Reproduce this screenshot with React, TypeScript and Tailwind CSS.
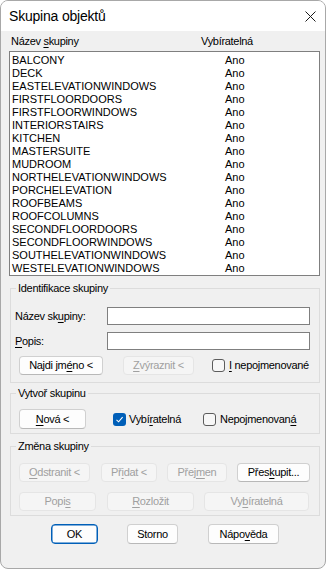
import React from 'react';

const groups = [
  'BALCONY',
  'DECK',
  'EASTELEVATIONWINDOWS',
  'FIRSTFLOORDOORS',
  'FIRSTFLOORWINDOWS',
  'INTERIORSTAIRS',
  'KITCHEN',
  'MASTERSUITE',
  'MUDROOM',
  'NORTHELEVATIONWINDOWS',
  'PORCHELEVATION',
  'ROOFBEAMS',
  'ROOFCOLUMNS',
  'SECONDFLOORDOORS',
  'SECONDFLOORWINDOWS',
  'SOUTHELEVATIONWINDOWS',
  'WESTELEVATIONWINDOWS',
];

const U = ({ children }: { children: React.ReactNode }) => <span className="underline underline-offset-[2px]">{children}</span>;

const Btn = ({
  children,
  className = '',
  disabled = false,
  primary = false,
}: {
  children: React.ReactNode;
  className?: string;
  disabled?: boolean;
  primary?: boolean;
}) => (
  <button
    type="button"
    disabled={disabled}
    className={`flex items-center justify-center rounded-[4px] border leading-none ${
      disabled
        ? 'bg-[#f5f5f5] border-[#e5e5e5] text-[#a0a0a0]'
        : primary
        ? 'bg-[#fdfdfd] border-[#005fb8] shadow-[inset_0_0_0_0.5px_#005fb8] text-black'
        : 'bg-[#fdfdfd] border-[#d0d0d0] border-b-[#b8b8b8] text-black'
    } ${className}`}
  >
    {children}
  </button>
);

const Check = ({ checked = false }: { checked?: boolean }) =>
  checked ? (
    <span className="flex h-[13px] w-[13px] items-center justify-center rounded-[3px] bg-[#005fb8]">
      <svg width="9" height="9" viewBox="0 0 9 9" fill="none">
        <path d="M1.5 4.8 L3.6 6.8 L7.6 2.2" stroke="white" strokeWidth="1.1" />
      </svg>
    </span>
  ) : (
    <span className="h-[13px] w-[13px] rounded-[3px] border border-[#5c5c5c] bg-[#f7f7f7]" />
  );

export default function App() {
  return (
    <div className="h-[571px] w-[327px] bg-white text-[11px] tracking-[-0.3px] text-black [font-family:'Liberation_Sans',Arial,sans-serif]">
      <div className="flex h-[569px] w-[326px] flex-col overflow-hidden rounded-[8px] border border-[#a8a8a8] bg-[#f0f0f0]">
        {/* Title bar */}
        <div className="flex h-[30px] shrink-0 items-center justify-between bg-white pl-[8px] pr-[9px]">
          <span className="text-[14px] tracking-[-0.2px]">Skupina objektů</span>
          <svg width="11" height="11" viewBox="0 0 11 11" fill="none">
            <path d="M0.5 0.5 L10.5 10.5 M10.5 0.5 L0.5 10.5" stroke="#1a1a1a" strokeWidth="1" />
          </svg>
        </div>

        {/* Header */}
        <div className="grid h-[20px] grid-cols-[190px_1fr] items-center pl-[10px]">
          <span>
            Název <U>s</U>kupiny
          </span>
          <span>Vybíratelná</span>
        </div>

        {/* List */}
        <div className="ml-[8px] h-[225px] w-[311px] border border-[#7f7f7f] bg-white pt-[2px] pl-[2px] tracking-normal">
          {groups.map((g) => (
            <div key={g} className="grid grid-cols-[213px_1fr] leading-[13px]">
              <span>{g}</span>
              <span>Ano</span>
            </div>
          ))}
        </div>

        {/* Identifikace skupiny */}
        <fieldset className="ml-[9px] mt-[4px] w-[310px] border border-[#dcdcdc] pb-[7px]">
          <legend className="ml-[5px] px-[2px] leading-[16px]">Identifikace skupiny</legend>
          <div className="mt-[11px] flex items-center pl-[4px]">
            <span className="w-[92px]">
              Název sk<U>u</U>piny:
            </span>
            <div className="h-[18px] w-[203px] border border-[#7f7f7f] bg-white" />
          </div>
          <div className="mt-[7px] flex items-center pl-[4px]">
            <span className="w-[92px]">
              <U>P</U>opis:
            </span>
            <div className="h-[18px] w-[203px] border border-[#7f7f7f] bg-white" />
          </div>
          <div className="mt-[6px] flex items-center pl-[8px]">
            <Btn className="h-[19px] w-[84px]">
              Najdi jm<U>é</U>no &lt;
            </Btn>
            <Btn disabled className="ml-[20px] h-[19px] w-[71px]">
              <U>Z</U>výraznit &lt;
            </Btn>
            <div className="ml-[18px] flex items-center gap-[4px]">
              <Check />
              <span>
                <U>I</U> nepojmenované
              </span>
            </div>
          </div>
        </fieldset>

        {/* Vytvoř skupinu */}
        <fieldset className="ml-[9px] mt-[2px] w-[310px] border border-[#dcdcdc] pb-[4px]">
          <legend className="ml-[5px] px-[2px] leading-[16px]">Vytvoř skupinu</legend>
          <div className="mt-[8px] flex items-center pl-[8px]">
            <Btn className="h-[20px] w-[67px]">
              <U>N</U>ová &lt;
            </Btn>
            <div className="ml-[27px] flex w-[90px] items-center gap-[3px]">
              <Check checked />
              <span>
                Vybí<U>r</U>atelná
              </span>
            </div>
            <div className="flex items-center gap-[4px]">
              <Check />
              <span>
                Nepojmenovan<U>á</U>
              </span>
            </div>
          </div>
        </fieldset>

        {/* Změna skupiny */}
        <fieldset className="ml-[9px] mt-[4px] w-[310px] border border-[#dcdcdc] pb-[4px]">
          <legend className="ml-[5px] px-[2px] leading-[16px]">Změna skupiny</legend>
          <div className="mt-[9px] flex items-center pl-[8px]">
            <Btn disabled className="h-[19px] w-[71px]">
              <U>O</U>dstranit &lt;
            </Btn>
            <Btn disabled className="ml-[11px] h-[19px] w-[56px]">
              Př<U>i</U>dat &lt;
            </Btn>
            <Btn disabled className="ml-[10px] h-[19px] w-[60px]">
              Přej<U>m</U>en
            </Btn>
            <Btn className="ml-[10px] h-[19px] w-[73px]">
              Přes<U>k</U>upit...
            </Btn>
          </div>
          <div className="mt-[10px] flex items-center pl-[8px]">
            <Btn disabled className="h-[19px] w-[77px]">
              Popi<U>s</U>
            </Btn>
            <Btn disabled className="ml-[11px] h-[19px] w-[87px]">
              <U>R</U>ozložit
            </Btn>
            <Btn disabled className="ml-[10px] h-[19px] w-[105px]">
              Vy<U>b</U>íratelná
            </Btn>
          </div>
        </fieldset>

        {/* Bottom buttons */}
        <div className="mt-[8px] flex items-center pl-[50px]">
          <Btn primary className="h-[20px] w-[47px]">
            OK
          </Btn>
          <Btn className="ml-[29px] h-[20px] w-[51px]">Storno</Btn>
          <Btn className="ml-[30px] h-[20px] w-[71px]">
            Nápo<U>v</U>ěda
          </Btn>
        </div>
      </div>
    </div>
  );
}
